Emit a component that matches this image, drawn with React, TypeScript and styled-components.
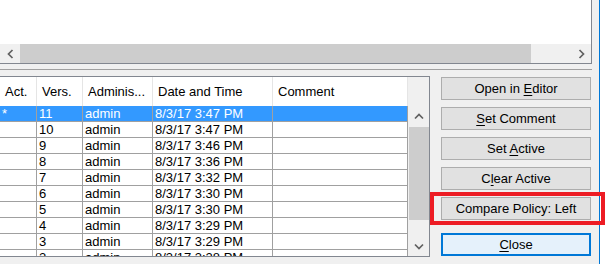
import styled, { createGlobalStyle } from "styled-components"

const GlobalStyle = createGlobalStyle`
  html, body {
    margin: 0;
    padding: 0;
    background: #ffffff;
  }
  body {
    font-family: "Liberation Sans", Arial, sans-serif;
    font-size: 13px;
    color: #000000;
  }
`

const Frame = styled.div`
  width: 605px;
  height: 264px;
  display: flex;
  overflow: hidden;
  background: #ffffff;
`

const Window = styled.div`
  width: 599px;
  display: flex;
  flex-direction: column;
  background: #f0f0f0;
`

const WindowEdge = styled.div`
  width: 1px;
  background: #0078d7;
`

const TopPanel = styled.div`
  box-sizing: border-box;
  width: 592px;
  height: 64px;
  display: flex;
  flex-direction: column;
  justify-content: flex-end;
  background: #ffffff;
  border-right: 1px solid #828790;
  border-bottom: 1px solid #828790;
`

const HScroll = styled.div`
  height: 19px;
  display: flex;
  background: #f0f0f0;
`

const ArrowBox = styled.div<{ $size: number }>`
  flex: 0 0 ${(p) => p.$size}px;
  display: flex;
  align-items: center;
  justify-content: center;
`

const HThumb = styled.div`
  width: 511px;
  background: #cdcdcd;
`

const Track = styled.div`
  flex: 1;
`

const Separator = styled.div`
  width: 592px;
  height: 1px;
  margin: 5px 0 6px;
  background: #a0a0a0;
`

const Lower = styled.div`
  display: flex;
  align-items: flex-start;
`

const Grid = styled.div`
  box-sizing: border-box;
  width: 430px;
  height: 181px;
  display: flex;
  flex-direction: column;
  border-top: 1px solid #828790;
  border-right: 1px solid #828790;
  border-bottom: 1px solid #828790;
  overflow: hidden;
`

const HeaderRow = styled.div`
  height: 29px;
  display: flex;
  flex: 0 0 29px;
`

const HeaderCell = styled.div<{ $w: number }>`
  box-sizing: border-box;
  width: ${(p) => p.$w}px;
  padding-left: 5px;
  display: flex;
  align-items: center;
  background: #ffffff;
  border-right: 1px solid #e5e5e5;
  white-space: nowrap;
`

const Corner = styled.div`
  flex: 1;
  background: #f0f0f0;
`

const Body = styled.div`
  flex: 1;
  display: flex;
  min-height: 0;
`

const Rows = styled.div`
  width: 408px;
  overflow: hidden;
  background: #ffffff;
`

const Row = styled.div`
  display: flex;
  height: 16px;
`

const Cell = styled.div<{ $w: number; $selected: boolean }>`
  box-sizing: border-box;
  width: ${(p) => p.$w}px;
  height: 16px;
  padding-left: 2px;
  line-height: 15px;
  white-space: nowrap;
  overflow: hidden;
  background: ${(p) => (p.$selected ? "#3399ff" : "#ffffff")};
  color: ${(p) => (p.$selected ? "#ffffff" : "#000000")};
  border-right: 1px solid #a0a0a0;
  border-bottom: 1px solid #a0a0a0;
`

const VScroll = styled.div`
  flex: 0 0 21px;
  display: flex;
  flex-direction: column;
  background: #f0f0f0;
`

const VArrow = styled.div<{ $h: number }>`
  flex: 0 0 ${(p) => p.$h}px;
  display: flex;
  align-items: center;
  justify-content: center;
`

const VThumb = styled.div`
  height: 93px;
  margin-left: 1px;
  background: #cdcdcd;
`

const ButtonPanel = styled.div`
  width: 161px;
  box-sizing: border-box;
  padding: 1px 0 0 11px;
  display: flex;
  flex-direction: column;
  gap: 7px;
`

const Button = styled.button<{ $default?: boolean }>`
  box-sizing: border-box;
  width: 150px;
  height: 23px;
  margin: 0;
  margin-top: ${(p) => (p.$default ? "6px" : "0")};
  padding: 0;
  font-family: "Liberation Sans", Arial, sans-serif;
  font-size: 13px;
  color: #000000;
  background: ${(p) => (p.$default ? "#e5f1fb" : "#e1e1e1")};
  border: ${(p) => (p.$default ? "2px solid #0078d7" : "1px solid #adadad")};
  u {
    text-decoration-thickness: 1px;
    text-underline-offset: 2px;
  }
`

const Marked = styled.div`
  position: relative;
  height: 23px;
`

const RedBox = styled.div`
  position: absolute;
  left: -11px;
  top: -5px;
  width: 175px;
  height: 33px;
  box-sizing: border-box;
  border: 4px solid #ed1c24;
  pointer-events: none;
`

const Chevron = ({ dir }: { dir: "left" | "right" | "up" | "down" }) => {
  const pts = {
    left: "5.5,1 1.5,5 5.5,9",
    right: "1.5,1 5.5,5 1.5,9",
    up: "1,5.5 5,1.5 9,5.5",
    down: "1,1.5 5,5.5 9,1.5",
  }[dir]
  const horiz = dir === "left" || dir === "right"
  return (
    <svg width={horiz ? 7 : 10} height={horiz ? 10 : 7} viewBox={horiz ? "0 0 7 10" : "0 0 10 7"}>
      <polyline points={pts} fill="none" stroke="#606060" strokeWidth="1.7" />
    </svg>
  )
}

const columns = [
  { title: "Act.", w: 37 },
  { title: "Vers.", w: 46 },
  { title: "Adminis...", w: 70 },
  { title: "Date and Time", w: 120 },
  { title: "Comment", w: 135 },
]

const versions = [
  { act: "*", ver: "11", time: "3:47" },
  { act: "", ver: "10", time: "3:47" },
  { act: "", ver: "9", time: "3:46" },
  { act: "", ver: "8", time: "3:36" },
  { act: "", ver: "7", time: "3:32" },
  { act: "", ver: "6", time: "3:30" },
  { act: "", ver: "5", time: "3:30" },
  { act: "", ver: "4", time: "3:29" },
  { act: "", ver: "3", time: "3:29" },
  { act: "", ver: "2", time: "3:28" },
]

export default function App() {
  return (
    <>
      <GlobalStyle />
      <Frame>
        <Window>
          <TopPanel>
            <HScroll>
              <ArrowBox $size={20}>
                <Chevron dir="left" />
              </ArrowBox>
              <HThumb />
              <Track />
              <ArrowBox $size={20}>
                <Chevron dir="right" />
              </ArrowBox>
            </HScroll>
          </TopPanel>
          <Separator />
          <Lower>
            <Grid>
              <HeaderRow>
                {columns.map((c) => (
                  <HeaderCell key={c.title} $w={c.w}>
                    {c.title}
                  </HeaderCell>
                ))}
                <Corner />
              </HeaderRow>
              <Body>
                <Rows>
                  {versions.map((v, i) => {
                    const sel = i === 0
                    const cells = [v.act, v.ver, "admin", `8/3/17 ${v.time} PM`, ""]
                    return (
                      <Row key={v.ver}>
                        {cells.map((text, j) => (
                          <Cell key={j} $w={columns[j].w} $selected={sel}>
                            {text}
                          </Cell>
                        ))}
                      </Row>
                    )
                  })}
                </Rows>
                <VScroll>
                  <VArrow $h={21}>
                    <Chevron dir="up" />
                  </VArrow>
                  <VThumb />
                  <Track />
                  <VArrow $h={20}>
                    <Chevron dir="down" />
                  </VArrow>
                </VScroll>
              </Body>
            </Grid>
            <ButtonPanel>
              <Button>
                Open in <u>E</u>ditor
              </Button>
              <Button>
                <u>S</u>et Comment
              </Button>
              <Button>
                Set <u>A</u>ctive
              </Button>
              <Button>
                C<u>l</u>ear Active
              </Button>
              <Marked>
                <Button>Compare Policy: Left</Button>
                <RedBox />
              </Marked>
              <Button $default>
                <u>C</u>lose
              </Button>
            </ButtonPanel>
          </Lower>
        </Window>
        <WindowEdge />
      </Frame>
    </>
  )
}
